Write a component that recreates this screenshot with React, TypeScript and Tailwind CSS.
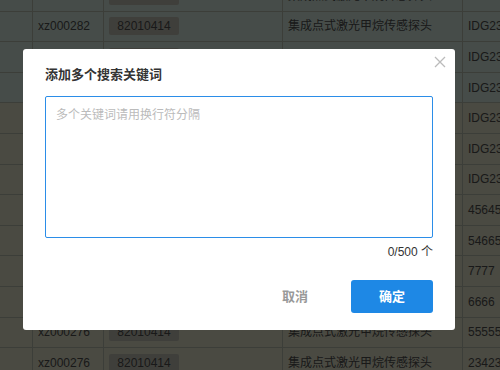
import React from "react";

/* 背景表格数据 (被遮罩盖住) */
const rows = [
  { code: "xz000283", tag: "82010414", name: "集成点式激光甲烷传感探头", no: "IDG2302001", hl: true },
  { code: "xz000282", tag: "82010414", name: "集成点式激光甲烷传感探头", no: "IDG2302002", hl: true },
  { code: "xz000281", tag: "82010414", name: "集成点式激光甲烷传感探头", no: "IDG2302003", hl: true },
  { code: "xz000280", tag: "82010414", name: "集成点式激光甲烷传感探头", no: "IDG2302004", hl: true },
  { code: "xz000279", tag: "82010414", name: "集成点式激光甲烷传感探头", no: "IDG2302005", hl: false },
  { code: "xz000279", tag: "82010414", name: "集成点式激光甲烷传感探头", no: "IDG2302006", hl: false },
  { code: "xz000278", tag: "82010414", name: "集成点式激光甲烷传感探头", no: "IDG2302007", hl: false },
  { code: "xz000278", tag: "82010414", name: "集成点式激光甲烷传感探头", no: "45645", hl: false },
  { code: "xz000277", tag: "82010414", name: "集成点式激光甲烷传感探头", no: "54665", hl: false },
  { code: "xz000277", tag: "82010414", name: "集成点式激光甲烷传感探头", no: "7777", hl: false },
  { code: "xz000276", tag: "82010414", name: "集成点式激光甲烷传感探头", no: "6666", hl: false },
  { code: "xz000276", tag: "82010414", name: "集成点式激光甲烷传感探头", no: "55555", hl: false },
  { code: "xz000276", tag: "82010414", name: "集成点式激光甲烷传感探头", no: "23423", hl: false },
];

export default function App() {
  return (
    <div
      className="relative w-[500px] h-[370px] overflow-hidden bg-[#f7f7dc]"
      style={{ fontFamily: '"Liberation Sans", "Noto Sans CJK SC", sans-serif' }}
    >
      {/* ============================== TABLA ============================== */}
      <div className="-mt-[19px] text-[12px] text-[#555]">
        {rows.map((r, i) => (
          <div
            key={i}
            className={`flex h-[30.6px] border-b border-[#c8cfbe] whitespace-nowrap ${
              r.hl ? "bg-[#e9fff3]" : "bg-[#f7f7dc]"
            }`}
          >
            <div className="w-[33px] shrink-0 border-r border-[#c8cfbe]" />
            <div className="w-[71px] shrink-0 border-r border-[#c8cfbe] flex items-center pl-[5px]">
              {r.code}
            </div>
            <div className="w-[179px] shrink-0 border-r border-[#c8cfbe] flex items-center pl-[5px]">
              <span className="w-[70px] h-[18px] rounded-[2px] bg-[#d4d4c6] flex items-center justify-center">
                {r.tag}
              </span>
            </div>
            <div className="w-[180px] shrink-0 border-r border-[#c8cfbe] flex items-center pl-[5px]">
              {r.name}
            </div>
            <div className="flex-1 flex items-center pl-[5px] overflow-hidden">{r.no}</div>
          </div>
        ))}
      </div>

      {/* ============================== MODAL ============================== */}
      <div className="absolute inset-0 bg-black/70" />

      <div className="absolute left-[23px] top-[49px] w-[432px] h-[281px] bg-white rounded-[3px] px-[22px] pt-[16px]">
        <button className="absolute right-[9px] top-[6px] w-[12px] h-[13px] text-[#bbb]">
          <svg viewBox="0 0 12 12" width="12" height="12" fill="none" stroke="currentColor" strokeWidth="1.3">
            <path d="M1 1 L11 11 M11 1 L1 11" />
          </svg>
        </button>

        <h3 className="text-[13px] leading-[20px] font-bold text-[#333]">
          添加多个搜索关键词
        </h3>

        <textarea
          autoFocus
          placeholder="多个关键词请用换行符分隔"
          className="mt-[11px] block w-[388px] h-[142px] resize-none rounded-[2px] border border-[#2b8de8] outline-none pl-[10px] pr-[9px] pt-[9px] pb-[7px] text-[12px] leading-[18px] text-[#333] placeholder:text-[#bbb]"
        />

        <p className="mt-[6px] text-right text-[12px] leading-[16px] text-[#333]">0/500 个</p>

        <div className="mt-[20px] flex justify-end gap-[15px]">
          <button className="w-[82px] h-[33px] text-[13px] font-bold text-[#999]">取消</button>
          <button className="w-[82px] h-[33px] rounded-[3px] bg-[#1e88e5] text-[13px] font-bold text-white">
            确定
          </button>
        </div>
      </div>
    </div>
  );
}
